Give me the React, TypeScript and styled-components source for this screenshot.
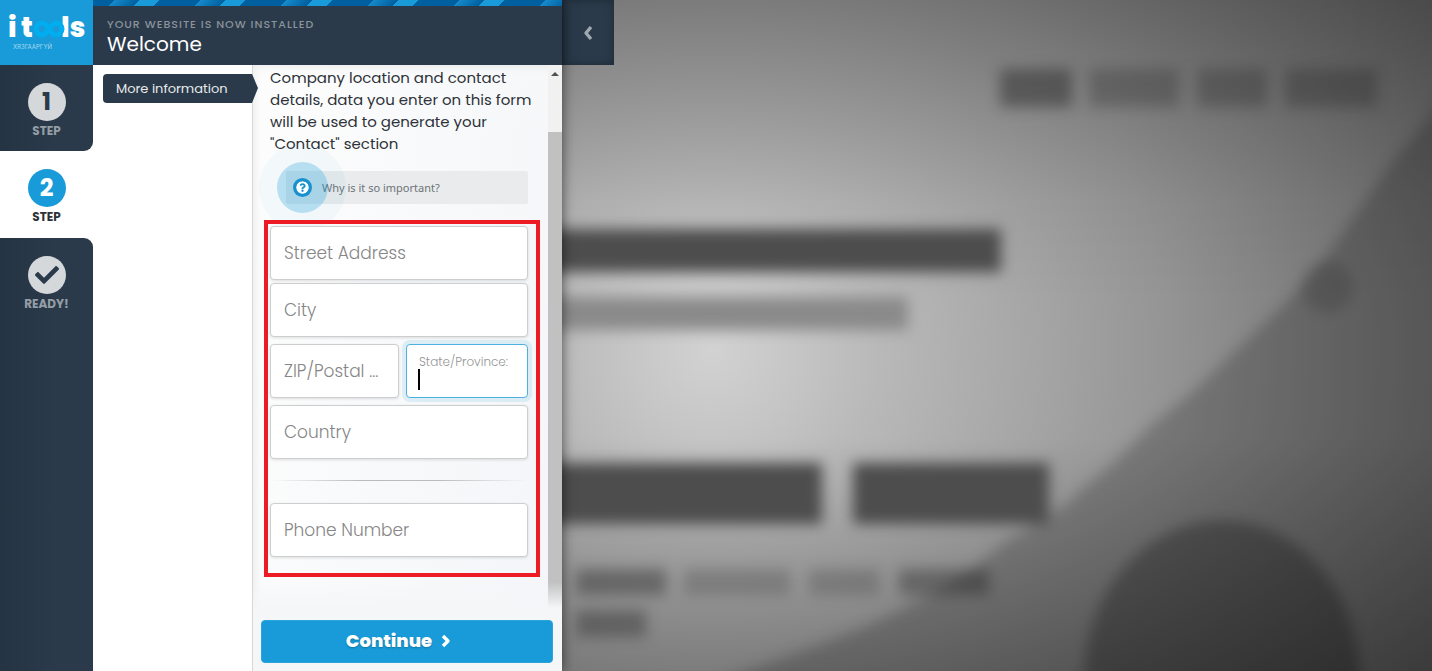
import React from 'react';
import styled, { createGlobalStyle, css } from 'styled-components';
import { FaCheck, FaQuestionCircle } from 'react-icons/fa';

const navy = '#2a3a4a';
const blue = '#189bd8';

const GlobalStyle = createGlobalStyle`
  *, *::before, *::after { box-sizing: border-box; }
  body { margin: 0; background: #777; color: #2d3238; font-family: Poppins, Inter, sans-serif; }
  button, input { font: inherit; }
`;

const Page = styled.div`
  display: grid;
  grid-template-columns: 562px 1fr;
  height: 100vh;
  overflow: hidden;
`;

const Wizard = styled.section`
  display: grid;
  grid-template-columns: 93px 159px 1fr;
  grid-template-rows: auto 1fr;
  min-height: 0;
  background: #fff;
  box-shadow: 0 0 12px rgba(0, 0, 0, 0.6);
  z-index: 1;
`;

const Brand = styled.a`
  display: flex;
  background: ${blue};
  svg { display: block; width: 93px; height: 65px; }
`;

const Header = styled.header`
  grid-column: 2 / 4;
  display: flex;
  flex-direction: column;
  height: 65px;
  background: ${navy};
`;

const Stripes = styled.div`
  height: 6px;
  background: repeating-linear-gradient(
    135deg,
    #005f9e 0 15px,
    #168acb 15px,
    #005f9e 33px,
    ${blue} 33px 47px,
    #005f9e 47px 61px
  );
`;

const Kicker = styled.p`
  margin: 11px 0 1px 14px;
  color: #8b939b;
  font-size: 11px;
  line-height: 14px;
  font-weight: 500;
  letter-spacing: 1px;
`;

const Title = styled.h1`
  margin: 0 0 0 14px;
  color: #fff;
  font-size: 20px;
  line-height: 24px;
  font-weight: 400;
`;

const Steps = styled.nav`
  display: flex;
  flex-direction: column;
  background: #fff;
`;

const Step = styled.a<{ $active?: boolean; $place: 'first' | 'middle' | 'last' }>`
  display: flex;
  flex-direction: column;
  align-items: center;
  height: 87px;
  padding-top: 18px;
  color: ${p => (p.$active ? '#2d3238' : '#959da5')};
  background: ${p => (p.$active ? '#fff' : `linear-gradient(90deg, #253443, ${navy} 60%)`)};
  font-size: 12px;
  line-height: 16px;
  font-weight: 700;
  text-decoration: none;
  ${p => p.$place === 'first' && css`height: 86px; border-radius: 0 0 9px 0;`}
  ${p => p.$place === 'last' && css`flex: 1; border-radius: 0 9px 0 0;`}
`;

const Disc = styled.span<{ $active?: boolean }>`
  display: flex;
  align-items: center;
  justify-content: center;
  width: 38px;
  height: 38px;
  margin-bottom: 2px;
  border-radius: 50%;
  background: ${p => (p.$active ? blue : '#d4d8db')};
  color: ${p => (p.$active ? '#fff' : navy)};
  font-size: 24px;
  font-weight: 700;
`;

const Submenu = styled.nav`
  padding: 9px 0 0 10px;
`;

const SubmenuItem = styled.a`
  display: block;
  position: relative;
  height: 29px;
  padding-left: 13px;
  border-radius: 4px 0 0 4px;
  background: ${navy};
  color: #e8eaec;
  font-size: 13px;
  line-height: 29px;
  font-weight: 400;
  text-decoration: none;
  &::after {
    content: '';
    position: absolute;
    z-index: 1;
    left: 100%;
    top: 0;
    border-left: 6px solid ${navy};
    border-top: 14px solid transparent;
    border-bottom: 15px solid transparent;
  }
`;

const Main = styled.main`
  display: flex;
  flex-direction: column;
  min-width: 0;
  min-height: 0;
  border-left: 1px solid #d5d7d9;
  background: linear-gradient(100deg, #fdfdfd, #f3f5f8);
`;

const Scroller = styled.div`
  position: relative;
  display: flex;
  flex: 1;
  min-height: 0;
  overflow: hidden;
  box-shadow: inset 8px 8px 8px -6px rgba(0, 0, 0, 0.07);
  &::after {
    content: '';
    position: absolute;
    left: 0;
    right: 0;
    bottom: 0;
    height: 26px;
    background: linear-gradient(rgba(245, 246, 248, 0), #f5f6f8);
  }
`;

const Content = styled.div`
  flex: 1;
  min-width: 0;
  padding: 2px 20px 0 17px;
`;

const Intro = styled.p`
  margin: 0 0 16px;
  font-size: 15px;
  line-height: 22px;
  font-weight: 400;
  white-space: nowrap;
`;

const Hint = styled.button`
  position: relative;
  display: flex;
  align-items: center;
  width: calc(100% - 16px);
  height: 33px;
  margin: 0 0 16px 16px;
  padding: 0 0 0 36px;
  border: 0;
  border-radius: 2px;
  background: #e9ebec;
  color: #6d7378;
  font-family: 'Noto Sans', sans-serif;
  font-size: 11px;
`;

const Beacon = styled.span`
  position: absolute;
  left: -9px;
  top: -9px;
  display: flex;
  align-items: center;
  justify-content: center;
  width: 51px;
  height: 51px;
  border-radius: 50%;
  background: rgba(24, 155, 216, 0.3);
  box-shadow: 0 0 0 18px rgba(24, 155, 216, 0.04);
  svg { padding: 3px; width: 19px; height: 19px; border-radius: 50%; background: #1792cf; color: #fff; }
`;

const Highlight = styled.form`
  position: relative;
  margin: 0 -12px 0 -6px;
  padding: 2px 8px 16px 2px;
  border: 4px solid #ed1c24;
`;

const Pair = styled.div`
  display: grid;
  grid-template-columns: 129px 1fr;
  gap: 7px;
  margin: 7px 0;
`;

const Field = styled.input`
  display: block;
  width: 100%;
  height: 54px;
  padding: 0 13px;
  border: 1px solid #ccced0;
  border-radius: 4px;
  background: #fff;
  box-shadow: 0 1px 3px rgba(0, 0, 0, 0.12);
  font-size: 17px;
  font-weight: 300;
  text-overflow: ellipsis;
  & + & { margin-top: 3px; }
  &::placeholder { color: #868686; opacity: 1; }
`;

const FocusedField = styled.label`
  display: block;
  height: 54px;
  padding: 9px 0 0 12px;
  border: 1px solid #4db1df;
  border-radius: 4px;
  background: #fff;
  box-shadow: 0 0 0 4px rgba(24, 155, 216, 0.12);
  color: #959595;
  font-size: 12px;
  font-weight: 300;
  line-height: 15px;
`;

const Entry = styled.span`
  display: flex;
  height: 21px;
  border-left: 2px solid #000;
  margin-left: -1px;
  input { width: 100%; padding: 0; border: 0; outline: 0; background: none; font-size: 17px; }
`;

const Divider = styled.hr`
  height: 1px;
  margin: 21px 0 22px;
  border: 0;
  background: linear-gradient(90deg, transparent, #bbb 35%, #bbb 65%, transparent);
`;

const ScrollTrack = styled.div`
  display: flex;
  flex-direction: column;
  align-items: center;
  width: 14px;
  padding-top: 7px;
  background: #f1f1f1;
`;

const ScrollArrow = styled.span`
  border: 4px solid transparent;
  border-top: 0;
  border-bottom-color: #505050;
`;

const ScrollThumb = styled.span`
  flex: 1;
  width: 14px;
  margin-top: 56px;
  background: #c1c1c1;
`;

const Actions = styled.footer`
  padding: 12px 9px 8px 8px;
  background: #f5f6f8;
`;

const Continue = styled.button`
  display: flex;
  align-items: center;
  justify-content: center;
  gap: 8px;
  width: 100%;
  height: 43px;
  padding: 0 16px 2px 0;
  border: 1px solid #2ba3dc;
  border-radius: 4px;
  background: ${blue};
  color: #fff;
  font-size: 18px;
  font-weight: 800;
  text-shadow: 0 1px 2px rgba(0, 0, 0, 0.25);
`;

const Preview = styled.aside`
  position: relative;
  min-width: 0;
  overflow: hidden;
`;

const Artwork = styled.svg`
  display: block;
  width: 100%;
  height: 100%;
`;

const Collapse = styled.button`
  position: absolute;
  left: 0;
  top: 0;
  display: flex;
  align-items: center;
  justify-content: center;
  width: 52px;
  height: 65px;
  padding: 0;
  border: 0;
  background: ${navy};
  box-shadow: inset 0 0 8px rgba(0, 0, 0, 0.3);
  color: #a0a8af;
`;

const Chevron = ({ d }: { d: string }) => (
  <svg width="12" height="16" viewBox="0 0 12 16" fill="none" stroke="currentColor" strokeWidth="3.4" strokeLinejoin="round" aria-hidden="true">
    <path d={d} />
  </svg>
);

const Logo = () => (
  <svg viewBox="0 0 93 65" aria-label="itools">
    <g fill="#fff" fontFamily="Poppins, Lato, sans-serif" fontWeight="800" fontSize="28">
      <text x="8" y="37">i</text>
      <text x="21" y="37">t</text>
      <text x="61" y="37">ls</text>
    </g>
    <path d="M49 29C46 24 44 23 42 23a6 6 0 0 0 0 12c3 0 5-3 7-6s4-6 7-6a6 6 0 0 1 0 12c-2 0-4-1-7-6z" fill="none" stroke="#00aeef" strokeWidth="5" />
    <text x="13" y="49" fill="#a8d8f0" fontFamily="Inter, sans-serif" fontSize="6">ХЯЗГААРГҮЙ</text>
  </svg>
);

const PreviewArtwork = () => (
  <Artwork viewBox="0 0 870 671" preserveAspectRatio="xMinYMin slice" aria-hidden="true">
    <defs>
      <radialGradient id="light" gradientUnits="userSpaceOnUse" cx="150" cy="350" r="820">
        <stop offset="0" stopColor="#d2d2d2" />
        <stop offset="0.1" stopColor="#c6c6c6" />
        <stop offset="0.2" stopColor="#b9b9b9" />
        <stop offset="0.4" stopColor="#a5a5a5" />
        <stop offset="0.55" stopColor="#959595" />
        <stop offset="0.75" stopColor="#7c7c7c" />
        <stop offset="1" stopColor="#5e5e5e" />
      </radialGradient>
      <linearGradient id="shade" x1="0" y1="0" x2="0" y2="1">
        <stop offset="0" stopColor="#000" stopOpacity="0.24" />
        <stop offset="0.3" stopColor="#000" stopOpacity="0.04" />
        <stop offset="0.45" stopColor="#000" stopOpacity="0" />
        <stop offset="0.65" stopColor="#000" stopOpacity="0" />
        <stop offset="1" stopColor="#000" stopOpacity="0.25" />
      </linearGradient>
      <filter id="blur" filterUnits="userSpaceOnUse" x="-60" y="-60" width="990" height="800" colorInterpolationFilters="sRGB">
        <feGaussianBlur stdDeviation="7" />
      </filter>
    </defs>
    <rect width="870" height="671" fill="url(#light)" />
    <rect width="870" height="671" fill="url(#shade)" />
    <g filter="url(#blur)">
      <path d="M920 20L870 115C850 140 838 150 821 175C800 205 790 220 766 254C730 300 705 320 666 358C640 385 615 405 588 426C560 455 545 470 521 488C500 510 475 525 444 541C410 570 380 590 333 612C290 635 240 650 160 680L120 740H920z" fill="#000" opacity="0.2" />
      <ellipse cx="660" cy="680" rx="138" ry="160" fill="#000" opacity="0.27" />
      <circle cx="765" cy="287" r="26" fill="#000" opacity="0.14" />
      <g fill="#000">
        <rect x="438" y="69" width="72" height="38" opacity="0.33" />
        <rect x="527" y="69" width="90" height="38" opacity="0.2" />
        <rect x="635" y="69" width="70" height="38" opacity="0.2" />
        <rect x="723" y="69" width="92" height="38" opacity="0.2" />
      </g>
      <g fill="#4d4d4d">
        <rect x="-30" y="229" width="469" height="43" />
        <rect x="-30" y="463" width="290" height="61" />
        <rect x="291" y="463" width="196" height="61" />
      </g>
      <rect x="-30" y="297" width="376" height="33" fill="#8a8a8a" />
      <g fill="#000">
        <rect x="14" y="569" width="90" height="26" opacity="0.3" />
        <rect x="122" y="569" width="106" height="26" opacity="0.16" />
        <rect x="247" y="569" width="70" height="26" opacity="0.16" />
        <rect x="337" y="569" width="90" height="26" opacity="0.28" />
        <rect x="14" y="610" width="70" height="27" opacity="0.28" />
      </g>
    </g>
  </Artwork>
);

export default function App() {
  return (
    <>
      <GlobalStyle />
      <Page>
        <Wizard>
          <Brand href="#"><Logo /></Brand>
          <Header>
            <Stripes />
            <Kicker>YOUR WEBSITE IS NOW INSTALLED</Kicker>
            <Title>Welcome</Title>
          </Header>
          <Steps>
            <Step href="#" $place="first"><Disc>1</Disc>STEP</Step>
            <Step href="#" $place="middle" $active><Disc $active>2</Disc>STEP</Step>
            <Step href="#" $place="last"><Disc><FaCheck /></Disc>READY!</Step>
          </Steps>
          <Submenu>
            <SubmenuItem href="#">More information</SubmenuItem>
          </Submenu>
          <Main>
            <Scroller>
              <Content>
                <Intro>
                  Company location and contact<br />
                  details, data you enter on this form<br />
                  will be used to generate your<br />
                  "Contact" section
                </Intro>
                <Hint type="button">
                  <Beacon><FaQuestionCircle /></Beacon>
                  Why is it so important?
                </Hint>
                <Highlight>
                  <Field aria-label="Street Address" placeholder="Street Address" />
                  <Field aria-label="City" placeholder="City" />
                  <Pair>
                    <Field aria-label="ZIP/Postal code" placeholder="ZIP/Postal ..." />
                    <FocusedField>
                      State/Province:
                      <Entry><input /></Entry>
                    </FocusedField>
                  </Pair>
                  <Field aria-label="Country" placeholder="Country" />
                  <Divider />
                  <Field aria-label="Phone Number" placeholder="Phone Number" />
                </Highlight>
              </Content>
              <ScrollTrack>
                <ScrollArrow />
                <ScrollThumb />
              </ScrollTrack>
            </Scroller>
            <Actions>
              <Continue type="button">Continue <Chevron d="M3 3L8 8L3 13" /></Continue>
            </Actions>
          </Main>
        </Wizard>
        <Preview>
          <PreviewArtwork />
          <Collapse type="button" aria-label="Collapse panel"><Chevron d="M9 2L4 8L9 14" /></Collapse>
        </Preview>
      </Page>
    </>
  );
}
